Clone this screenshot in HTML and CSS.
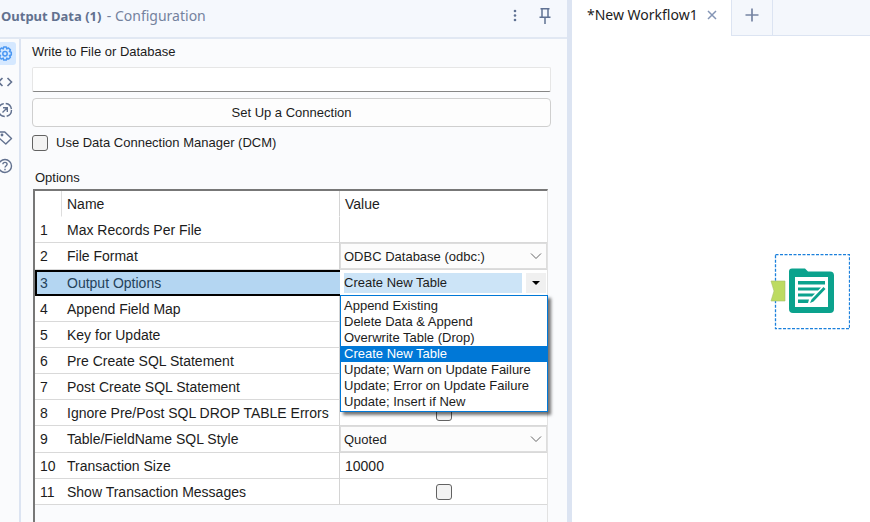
FILE: index.html
```html
<!DOCTYPE html>
<html lang="en">
<head>
<meta charset="utf-8">
<title>Output Data - Configuration</title>
<link rel="stylesheet" href="styles.css">
</head>
<body>
<div class="app">
  <section class="panel">
    <header class="panel-header">
      <h1 class="panel-title">Output Data (1) <span class="panel-subtitle">- Configuration</span></h1>
      <button class="icon-button" type="button" aria-label="More">
        <svg width="16" height="16" viewBox="0 0 16 16" fill="#5f7193"><circle cx="8" cy="3" r="1.300"/><circle cx="8" cy="7.500" r="1.300"/><circle cx="8" cy="12" r="1.300"/></svg>
      </button>
      <button class="icon-button" type="button" aria-label="Pin">
        <svg width="16" height="18" viewBox="0 0 16 18" fill="none" stroke="#5f7193" stroke-width="1.5"><path d="M3.500 1.700h9M5 1.700v8M11 1.700v8M2.500 10.200h11M8 10.200V17"/></svg>
      </button>
    </header>
    <div class="panel-body">
      <nav class="rail" aria-label="Sections">
        <button class="rail-button rail-active" type="button" aria-label="Configuration">
          <svg width="16" height="16" viewBox="0 0 16 16" fill="none" stroke="#4a97f2" stroke-width="1.5" stroke-linejoin="round"><path d="M6.7 1h2.6l.5 1.9 1.7-.9 1.9 1.9-1 1.7 1.9.6v2.7l-1.9.5 1 1.8-1.9 1.9-1.7-1-.5 1.9H6.700l-.5-1.9-1.800 1-1.900-1.900 1-1.800L1.600 9V6.300l1.900-.7-1-1.700L4.400 2l1.800.9z"/><circle cx="8" cy="7.700" r="2.200"/></svg>
        </button>
        <button class="rail-button" type="button" aria-label="XML view">
          <svg width="16" height="16" viewBox="0 0 16 16" fill="none" stroke="#62718f" stroke-width="1.600"><path d="M5.500 4 1.500 8l4 4M10.500 4l4 4-4 4"/></svg>
        </button>
        <button class="rail-button" type="button" aria-label="Navigation">
          <svg width="16" height="16" viewBox="0 0 16 16" fill="none" stroke="#62718f" stroke-width="1.400"><circle cx="8" cy="8" r="6.500" stroke-dasharray="8.200 2"/><path d="M5.500 10.500l4.500-4.500M6 5.700h4.300V10"/></svg>
        </button>
        <button class="rail-button" type="button" aria-label="Annotation">
          <svg width="16" height="16" viewBox="0 0 16 16" fill="none" stroke="#62718f" stroke-width="1.400" stroke-linejoin="round"><path d="M1.500 2h6.300L14.500 8.500 8.800 14 1.500 7.500z"/><circle cx="5" cy="5" r=".7"/></svg>
        </button>
        <button class="rail-button" type="button" aria-label="Help">
          <svg width="16" height="16" viewBox="0 0 16 16" fill="none" stroke="#62718f" stroke-width="1.400"><circle cx="8" cy="8" r="6.500"/><path d="M5.900 6.300c0-2.600 4.200-2.600 4.200 0C10.100 7.700 8 7.800 8 9.600M8 10.700v1.500"/></svg>
        </button>
      </nav>
      <div class="form">
        <label class="field-label" for="target">Write to File or Database</label>
        <input class="text-input" id="target" type="text">
        <button class="connect-button" type="button">Set Up a Connection</button>
        <label class="check-label"><input class="check" type="checkbox">Use Data Connection Manager (DCM)</label>
        <h2 class="options-title">Options</h2>
        <div class="grid-box">
          <table class="options">
            <thead>
              <tr><th class="col-num"></th><th class="col-name">Name</th><th class="col-value">Value</th></tr>
            </thead>
            <tbody>
              <tr><td class="num">1</td><td class="name">Max Records Per File</td><td class="value"></td></tr>
              <tr><td class="num">2</td><td class="name">File Format</td><td class="value">
                <div class="combo"><select class="combo-select" aria-label="File Format"><option>ODBC Database (odbc:)</option></select>
                <svg class="combo-arrow" width="12" height="8" viewBox="0 0 12 8" fill="none" stroke="#666"><path d="M1 1.500l5 5 5-5"/></svg></div></td></tr>
              <tr class="selected"><td class="num">3</td><td class="name">Output Options</td><td class="value">
                <div class="editor">
                  <button class="editor-button" type="button" aria-haspopup="listbox" aria-expanded="true" aria-controls="choices">
                    <span class="editor-text">Create New Table</span>
                    <span class="editor-arrow"><svg width="8" height="4" viewBox="0 0 8 4"><path d="M0 0h8L4 4z"/></svg></span>
                  </button>
                  <ul class="menu" id="choices" role="listbox" aria-label="Output Options">
                    <li class="menu-item" role="option">Append Existing</li>
                    <li class="menu-item" role="option">Delete Data &amp; Append</li>
                    <li class="menu-item" role="option">Overwrite Table (Drop)</li>
                    <li class="menu-item menu-current" role="option" aria-selected="true">Create New Table</li>
                    <li class="menu-item" role="option">Update; Warn on Update Failure</li>
                    <li class="menu-item" role="option">Update; Error on Update Failure</li>
                    <li class="menu-item" role="option">Update; Insert if New</li>
                  </ul>
                </div></td></tr>
              <tr><td class="num">4</td><td class="name">Append Field Map</td><td class="value"></td></tr>
              <tr><td class="num">5</td><td class="name">Key for Update</td><td class="value"></td></tr>
              <tr><td class="num">6</td><td class="name">Pre Create SQL Statement</td><td class="value"></td></tr>
              <tr><td class="num">7</td><td class="name">Post Create SQL Statement</td><td class="value"></td></tr>
              <tr><td class="num">8</td><td class="name">Ignore Pre/Post SQL DROP TABLE Errors</td><td class="value value-check"><input class="check" type="checkbox" aria-label="Ignore Pre/Post SQL DROP TABLE Errors"></td></tr>
              <tr><td class="num">9</td><td class="name">Table/FieldName SQL Style</td><td class="value">
                <div class="combo"><select class="combo-select" aria-label="Table/FieldName SQL Style"><option>Quoted</option></select>
                <svg class="combo-arrow" width="12" height="8" viewBox="0 0 12 8" fill="none" stroke="#666"><path d="M1 1.500l5 5 5-5"/></svg></div></td></tr>
              <tr><td class="num">10</td><td class="name">Transaction Size</td><td class="value">10000</td></tr>
              <tr><td class="num">11</td><td class="name">Show Transaction Messages</td><td class="value value-check"><input class="check" type="checkbox" aria-label="Show Transaction Messages"></td></tr>
            </tbody>
          </table>
        </div>
      </div>
    </div>
  </section>
  <main class="workspace">
    <div class="tabs">
      <div class="tab"><span>*New Workflow1</span>
        <button class="tab-close" type="button" aria-label="Close tab"><svg width="10" height="10" viewBox="0 0 10 10" fill="none" stroke="#8495b5" stroke-width="1.500"><path d="M1 1l8 8M9 1L1 9"/></svg></button>
      </div>
      <button class="tab-add" type="button" aria-label="New tab"><svg width="14" height="14" viewBox="0 0 14 14" fill="none" stroke="#7685a3" stroke-width="1.700"><path d="M7 .5v13M.5 7h13"/></svg></button>
    </div>
    <div class="canvas">
      <svg class="node" width="80" height="76" viewBox="0 0 80 76" role="img" aria-label="Output Data tool">
        <rect x="5.500" y=".7" width="74" height="74" fill="#fff" stroke="#1b80dc" stroke-width="1.300" stroke-dasharray="3 1.500"/>
        <path d="M1 27h14v20H1l3-10z" fill="#bddb62" stroke="#a9c06b" stroke-width=".6"/>
        <path d="M22 14.500h13l3 3h22a4 4 0 0 1 4 4V55a4 4 0 0 1-4 4H23a4 4 0 0 1-4-4V17.500a3 3 0 0 1 3-3z" fill="#0ba28d"/>
        <path d="M25 23h33v30H25z" fill="#fff"/>
        <path d="M28 27H55v3.500H28zM28 33.500H51L48 36.500H28zM28 39.500H45L42 42.500H28zM28 45.500h11L38 49H28zM53.500 33l2 2-12 12.500-3.500 1.500 1.500-3.500z" fill="#0ba28d"/>
      </svg>
    </div>
  </main>
</div>
</body>
</html>
```
FILE: styles.css
```css
* { box-sizing: border-box; }

body {
  margin: 0;
  font: 14px/16px "Liberation Sans", Arial, sans-serif;
  color: #1c1c1c;
  background: #fff;
}

button, input, select { font: inherit; color: inherit; }
button { padding: 0; border: 0; background: none; }
svg { display: block; }

.app {
  display: grid;
  grid-template-columns: 572fr 298fr;
  height: 100vh;
  overflow: hidden;
}

.panel {
  display: flex;
  flex-direction: column;
  min-width: 0;
  border-right: 5px solid #dce4f2;
  background: #fafbfd;
}

.panel-header {
  display: flex;
  align-items: center;
  gap: 14px;
  height: 39px;
  padding: 0 14px 6px 1px;
  border-bottom: 2px solid #e1e8f3;
  background: #f5f8fd;
  color: #62718f;
}

.panel-title {
  flex: 1;
  margin: 0;
  font: 700 13px/18px "Noto Sans", sans-serif;
}

.panel-subtitle { margin-left: 2px; font-size: 14px; font-weight: 400; color: #74829e; }

.panel-body { display: flex; flex: 1; min-height: 0; }

.rail {
  display: flex;
  flex-direction: column;
  gap: 5px;
  width: 21px;
  padding-top: 3px;
  overflow: hidden;
  border-right: 2px solid #dce4f2;
}

.rail-button {
  display: grid;
  flex: none;
  place-items: center;
  width: 22px;
  height: 23px;
  margin-left: -6px;
  border-radius: 3px;
}

.rail-active { background: #d5e8ff; }

.form {
  display: flex;
  flex: 1;
  flex-direction: column;
  min-width: 0;
  padding: 5px 16px 0 11px;
  overflow: hidden;
}

.field-label { font-size: 13px; }

.text-input {
  height: 25px;
  margin-top: 7px;
  border: 1px solid #e6e6e6;
  border-bottom-color: #868686;
  border-radius: 2px;
  background: #fff;
}

.connect-button {
  height: 29px;
  margin-top: 6px;
  padding-top: 1px;
  border: 1px solid #cfcfcf;
  border-radius: 4px;
  background: #fdfdfd;
  font-size: 13px;
}

.check-label {
  display: flex;
  align-items: center;
  gap: 8px;
  margin-top: 8px;
  font-size: 13px;
}

.check {
  appearance: none;
  width: 16px;
  height: 16px;
  margin: 0;
  border: 1px solid #626262;
  border-radius: 3px;
  background: #f3f3f3;
}

.options-title { margin: 19px 0 3px 3px; font-size: 13px; font-weight: 400; }

.grid-box {
  flex: 1;
  margin: 0 3px 0 1px;
  border: 2px solid #777;
  border-width: 2px 1px 0 2px;
  border-right-color: #e2e2e2;
}

.options {
  width: 100%;
  table-layout: fixed;
  border-spacing: 0;
  background: #fff;
}

th, td {
  height: 26px;
  padding: 0 5px;
  border-bottom: 1px solid #d9d9d9;
  text-align: left;
  font-weight: 400;
  white-space: nowrap;
}

thead th { padding-top: 1px; border-bottom-color: #fff; }
.col-num { width: 27px; border-right: 1px solid #ddd; }
.col-name { width: 278px; border-right: 1px solid #d4d4d4; }
.name { border-right: 1px solid #d4d4d4; }

.selected .num, .selected .name {
  border: solid #000;
  border-width: 2px 0;
  background: #b4d6f2;
  color: #25435b;
}

.selected .num { border-left-width: 2px; padding-left: 3px; }

td.value:has(.combo), td.value:has(.editor) { padding: 0; }
.value-check .check { display: block; margin: 0 auto; }

.combo, .combo-select { height: 26px; }
.combo { display: grid; align-items: center; }

.combo-select {
  grid-area: 1 / 1;
  appearance: none;
  width: 100%;
  padding: 2px 24px 0 3px;
  border: 1px solid #ddd;
  border-radius: 0;
  background: #fcfcfc;
  font-size: 13px;
}

.combo-arrow { grid-area: 1 / 1; justify-self: end; margin-right: 5px; pointer-events: none; }

.editor { position: relative; height: 25px; }

.editor-button {
  display: flex;
  gap: 4px;
  width: 100%;
  height: 25px;
  padding: 3px 1px 2px 4px;
  background: #fff;
  font-size: 13px;
  line-height: 20px;
  text-align: left;
}

.editor-text { flex: 1; background: #cce4f7; }
.editor-arrow { display: grid; place-items: center; width: 20px; height: 20px; background: #f0f0f0; }

.menu {
  position: absolute;
  z-index: 1;
  top: 100%;
  left: 0;
  right: -1px;
  margin: 0;
  padding: 2px 0 1px;
  border: 1px solid #0078d7;
  background: #fff;
  box-shadow: 3px 3px 3px rgb(0 0 0 / 55%);
  list-style: none;
  font-size: 13px;
}

.menu-item { padding: 0 3px; }
.menu-current { background: #0078d7; color: #fff; }

.workspace { display: flex; flex-direction: column; min-width: 0; }

.tabs {
  display: flex;
  height: 36px;
  background: #f4f7fc;
}

.tabs::after { content: ""; flex: 1; border-bottom: 1px solid #dce4f2; }

.tab {
  display: flex;
  align-items: center;
  gap: 9px;
  padding: 0 14px 6px 15px;
  background: #fff;
  font: 14px/18px "Noto Sans", sans-serif;
}

.tab-add {
  display: grid;
  place-items: center;
  width: 42px;
  padding-bottom: 6px;
  border: solid #dce4f2;
  border-width: 0 1px 1px;
}

.canvas { position: relative; flex: 1; }
.node { position: absolute; left: 198px; top: 218px; }
```
